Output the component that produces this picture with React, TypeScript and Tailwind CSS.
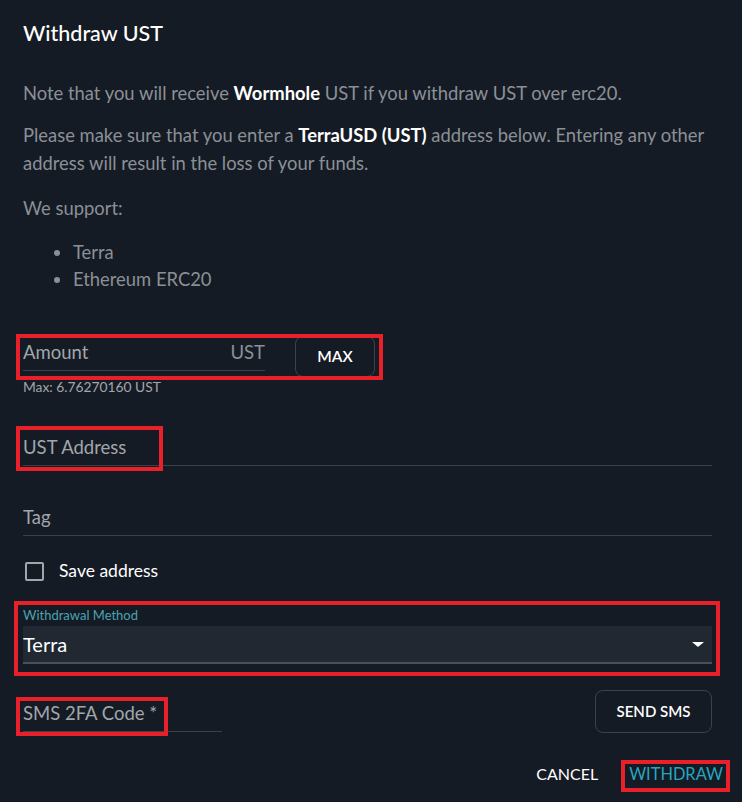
import React from "react";

function RedMark({ className }: { className: string }) {
  return <div className={`pointer-events-none absolute border-4 border-[#e8202a] ${className}`} />;
}

function Field({ label, className = "" }: { label: string; className?: string }) {
  return (
    <div className={`border-b border-[#3a4049] pt-[5px] pb-[7px] text-[18.5px] leading-[22px] text-[#a2a6ab] ${className}`}>
      {label}
    </div>
  );
}

export default function App() {
  return (
    <div className="w-[742px] h-[802px] bg-[#151b24] font-['Lato',sans-serif] overflow-hidden">
      <div className="pl-[23px] pr-[30px]">
        <h2 className="pt-[21px] text-[21.5px] leading-[24px] font-medium text-white">Withdraw UST</h2>

        <div className="mt-[34px] text-[18.4px] leading-[28px] text-[#8b9097] whitespace-nowrap">
          <p>
            Note that you will receive <b className="font-bold text-white">Wormhole</b> UST if you withdraw UST over erc20.
          </p>
          <p className="mt-[14px]">
            Please make sure that you enter a <b className="font-bold text-white">TerraUSD (UST)</b> address below. Entering any
            other
            <br />
            address will result in the loss of your funds.
          </p>
          <p className="mt-[17px]">We support:</p>
          <ul className="mt-[17px] list-disc pl-[50px] leading-[27px]">
            <li>Terra</li>
            <li>Ethereum ERC20</li>
          </ul>
        </div>

        {/* amount + max */}
        <div className="relative mt-[43px] flex items-start gap-[30px]">
          <div className="flex w-[242px] items-center justify-between border-b border-[#3a4049] pt-[5px] pb-[7px] text-[18.5px] leading-[22px] text-[#a2a6ab]">
            <span>Amount</span>
            <span className="text-[#8b9097]">UST</span>
          </div>
          <button className="h-[41px] w-[80px] rounded-[8px] border border-[#3c424b] text-[15.5px] font-semibold text-white">
            MAX
          </button>
          <RedMark className="-left-[7px] -top-[2px] w-[367px] h-[46px]" />
        </div>
        <div className="mt-[2px] text-[13.8px] leading-[16px] text-[#a2a6ab]">Max: 6.76270160 UST</div>

        <div className="relative mt-[36px]">
          <Field label="UST Address" />
          <RedMark className="-left-[7px] -top-[5px] w-[147px] h-[45px]" />
        </div>

        <Field label="Tag" className="mt-[35px]" />

        <label className="mt-[25px] flex items-center gap-[15px] text-[17.5px] leading-[20px] text-white">
          <span className="ml-[2px] block h-[19px] w-[19px] rounded-[2px] border-2 border-[#a2a6ab]" />
          Save address
        </label>

        {/* withdrawal method select */}
        <div className="relative mt-[26px]">
          <div className="text-[13px] leading-[16px] text-[#4aa3b0]">Withdrawal Method</div>
          <div className="mt-[3px] flex h-[38px] items-center justify-between border-b-2 border-[#4a5059] bg-[#212832] text-[20px] text-white">
            <span>Terra</span>
            <svg width="24" height="24" viewBox="0 0 24 24" className="mr-[2px]" fill="#ffffff">
              <path d="M6 10l6 5 6-5z" />
            </svg>
          </div>
          <RedMark className="-left-[9px] -top-[6px] w-[706px] h-[75px]" />
        </div>

        {/* sms code */}
        <div className="mt-[26px] flex items-start justify-between">
          <div className="relative mt-[7px]">
            <Field label="SMS 2FA Code *" className="w-[199px]" />
            <RedMark className="-left-[7px] top-0 w-[152px] h-[39px]" />
          </div>
          <button className="h-[43px] w-[117px] rounded-[8px] border border-[#3c424b] text-[15px] font-semibold text-white">
            SEND SMS
          </button>
        </div>
      </div>

      <div className="mt-[25px] flex justify-end gap-[15px] pr-[11px]">
        <button className="px-[8px] py-[6px] text-[16px] leading-[20px] text-white">CANCEL</button>
        <div className="relative">
          <button className="px-[8px] py-[6px] text-[16.4px] leading-[20px] text-[#27a6c0]">WITHDRAW</button>
          <RedMark className="left-0 top-[2px] w-[109px] h-[32px]" />
        </div>
      </div>
    </div>
  );
}
